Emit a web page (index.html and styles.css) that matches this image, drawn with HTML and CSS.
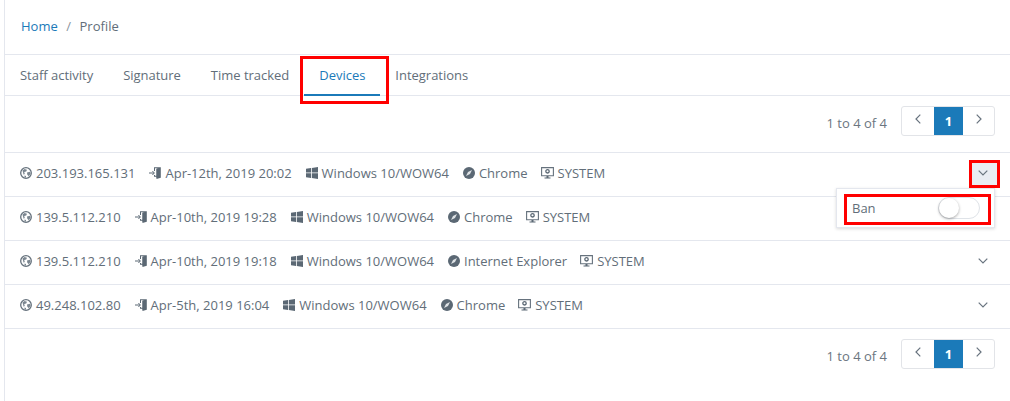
FILE: index.html
```html
<!DOCTYPE html>
<html lang="en">
<head>
<meta charset="utf-8">
<title>Devices</title>
<link rel="stylesheet" href="styles.css">
</head>
<body>
<svg width="0" height="0" class="defs">
  <symbol id="i-globe" viewBox="0 0 12 12"><circle cx="6" cy="6" r="5.300" fill="none" stroke="#66727d" stroke-width="1.300"/><path d="M2.500 3.500l2-1.500 2.500 .8-.8 1.700-2 .4 .6 2-1.200 .8zM7 5.500l3-.8 .6 2-1.800 2.600-1.500-1.500zM4.500 8.500l1.500 .5 0 1.800-1.500-.5z" fill="#7b8690"/></symbol>
  <symbol id="i-login" viewBox="0 0 12 12"><path d="M5 .3h6.800v10.500L7.500 12V9.800H5V8h1V8.800h1.500V1.800L10 1.300H6V4H5z" fill="#5b6874"/><path d="M7.500 1.800 11 1v9.200l-3.500 1z" fill="#5b6874"/><path d="M0 6h5M3.400 4l2 2-2 2" fill="none" stroke="#5b6874" stroke-width="1"/></symbol>
  <symbol id="i-win" viewBox="0 0 12 12"><path d="M0 1.700 5 1v4.500H0zM5.800.9 12 0v5.500H5.800zM0 6.300h5v4.700l-5-.7zM5.800 6.300H12V12l-6.200-.9z" fill="#5b6874"/></symbol>
  <symbol id="i-compass" viewBox="0 0 12 12"><circle cx="6" cy="6" r="6" fill="#5b6874"/><path d="M9 3 7 7 3 9 5 5z" fill="#dfe3e6"/></symbol>
  <symbol id="i-monitor" viewBox="0 0 13 12"><path d="M.6.600h11.800v8.200H.6z" fill="none" stroke="#66727d" stroke-width="1.100"/><circle cx="6.500" cy="4.300" r="1.700" fill="none" stroke="#5b6874" stroke-width="1.300"/><path d="M5.500 9h2v1.500h2v1h-6v-1h2z" fill="#5b6874"/></symbol>
  <symbol id="i-chev" viewBox="0 0 10 6"><path d="M.7.700 5 5 9.300.700" fill="none" stroke="#69747f" stroke-width="1.200"/></symbol>
</svg>
<main class="page">
  <nav class="crumbs"><a class="crumb-link">Home</a><span class="crumb-sep">/</span><span>Profile</span></nav>
  <div class="tabs">
    <span class="tab">Staff activity</span>
    <span class="tab">Signature</span>
    <span class="tab">Time tracked</span>
    <span class="tab tab-active">Devices</span>
    <span class="tab">Integrations</span>
  </div>
  <div class="pager-row">
    <span class="count">1 to 4 of 4</span>
    <div class="pager">
      <span class="pg pg-first"><svg class="pg-chev pg-prev"><use href="#i-chev"/></svg></span>
      <span class="pg pg-on">1</span>
      <span class="pg pg-last"><svg class="pg-chev pg-next"><use href="#i-chev"/></svg></span>
    </div>
  </div>
  <div class="list">
    <div class="row">
      <span class="item"><svg class="ic"><use href="#i-globe"/></svg>203.193.165.131</span>
      <span class="item"><svg class="ic"><use href="#i-login"/></svg>Apr-12th, 2019 20:02</span>
      <span class="item"><svg class="ic"><use href="#i-win"/></svg>Windows 10/WOW64</span>
      <span class="item"><svg class="ic"><use href="#i-compass"/></svg>Chrome</span>
      <span class="item item-m"><svg class="ic ic-m"><use href="#i-monitor"/></svg>SYSTEM</span>
      <span class="toggle toggle-open"><svg class="chev"><use href="#i-chev"/></svg></span>
      <div class="menu">
        <span>Ban</span>
        <span class="switch"><span class="knob"></span></span>
      </div>
    </div>
    <div class="row">
      <span class="item"><svg class="ic"><use href="#i-globe"/></svg>139.5.112.210</span>
      <span class="item"><svg class="ic"><use href="#i-login"/></svg>Apr-10th, 2019 19:28</span>
      <span class="item"><svg class="ic"><use href="#i-win"/></svg>Windows 10/WOW64</span>
      <span class="item"><svg class="ic"><use href="#i-compass"/></svg>Chrome</span>
      <span class="item item-m"><svg class="ic ic-m"><use href="#i-monitor"/></svg>SYSTEM</span>
      <span class="toggle"><svg class="chev"><use href="#i-chev"/></svg></span>
    </div>
    <div class="row">
      <span class="item"><svg class="ic"><use href="#i-globe"/></svg>139.5.112.210</span>
      <span class="item"><svg class="ic"><use href="#i-login"/></svg>Apr-10th, 2019 19:18</span>
      <span class="item"><svg class="ic"><use href="#i-win"/></svg>Windows 10/WOW64</span>
      <span class="item"><svg class="ic"><use href="#i-compass"/></svg>Internet Explorer</span>
      <span class="item item-m"><svg class="ic ic-m"><use href="#i-monitor"/></svg>SYSTEM</span>
      <span class="toggle"><svg class="chev"><use href="#i-chev"/></svg></span>
    </div>
    <div class="row">
      <span class="item"><svg class="ic"><use href="#i-globe"/></svg>49.248.102.80</span>
      <span class="item"><svg class="ic"><use href="#i-login"/></svg>Apr-5th, 2019 16:04</span>
      <span class="item"><svg class="ic"><use href="#i-win"/></svg>Windows 10/WOW64</span>
      <span class="item"><svg class="ic"><use href="#i-compass"/></svg>Chrome</span>
      <span class="item item-m"><svg class="ic ic-m"><use href="#i-monitor"/></svg>SYSTEM</span>
      <span class="toggle"><svg class="chev"><use href="#i-chev"/></svg></span>
    </div>
  </div>
  <div class="pager-row pager-row-bottom">
    <span class="count">1 to 4 of 4</span>
    <div class="pager">
      <span class="pg pg-first"><svg class="pg-chev pg-prev"><use href="#i-chev"/></svg></span>
      <span class="pg pg-on">1</span>
      <span class="pg pg-last"><svg class="pg-chev pg-next"><use href="#i-chev"/></svg></span>
    </div>
  </div>
  <div class="mark mark-tab"></div>
  <div class="mark mark-toggle"></div>
  <div class="mark mark-ban"></div>
</main>
</body>
</html>
```
FILE: styles.css
```css
* { box-sizing: border-box; }
html, body { margin: 0; padding: 0; background: #fff; height: 401px; overflow: hidden; }
body { font-family: "Open Sans", sans-serif; font-size: 13px; color: #626e79; }
.defs { position: absolute; }
.page { position: relative; margin-left: 4px; height: 401px; border-left: 1px solid #e4e7ee; }
.crumbs { height: 55px; padding: 0 16px 2px; display: flex; align-items: center; gap: 8.5px; border-bottom: 1px solid #e4e7ee; }
.crumb-link { color: #1b7ab9; }
.crumb-sep { color: #8a949e; }
.tabs { height: 41px; display: flex; border-bottom: 1px solid #e4e7ee; letter-spacing: -0.02px; }
.tab { padding: 0 15px; line-height: 41px; height: 41px; }
.tab-active { color: #1b7ab9; border-bottom: 2px solid #1b7ab9; }
.pager-row { height: 56px; display: flex; justify-content: flex-end; align-items: flex-start; padding: 10px 15px 0 0; gap: 14px; }
.pager-row-bottom { height: 50px; }
.count { color: #6b7680; margin-top: 8px; }
.pager { display: flex; height: 30px; border: 1px solid #e2e4e8; border-radius: 3px; }
.pg { width: 29px; display: flex; align-items: center; justify-content: center; }
.pg-first { width: 32px; padding-bottom: 4px; }
.pg-last { width: 31px; padding-bottom: 4px; }
.pg-on { background: #1b7ab9; color: #fff; font-weight: 700; }
.pg-chev { width: 10px; height: 6px; }
.pg-prev { transform: rotate(90deg); }
.pg-next { transform: rotate(-90deg); }
.list { border-top: 1px solid #e4e7ee; border-bottom: 1px solid #e4e7ee; }
.row { position: relative; height: 44px; display: flex; align-items: center; padding: 0 0 3px 15px; gap: 14px; border-top: 1px solid #e4e7ee; }
.row:first-child { border-top: 0; height: 43px; }
.item { display: flex; align-items: center; gap: 4px; white-space: nowrap; }
.item-m { margin-left: -1px; }
.ic { width: 12px; height: 12px; }
.ic-m { width: 13px; }
.toggle { position: absolute; right: 13px; top: 7px; width: 28px; height: 26px; display: flex; align-items: center; justify-content: center; }
.toggle-open { background: #e9ecf3; }
.chev { width: 10px; height: 6px; }
.menu { position: absolute; z-index: 2; top: 35px; right: 15px; width: 159px; height: 40px; padding: 0 14px 0 15px; display: flex; align-items: center; justify-content: space-between; background: #fff; border: 1px solid #e4e7ee; box-shadow: 0 1px 3px rgba(0,0,0,.15); }
.switch { width: 42px; height: 22px; border: 1px solid #dfe3e8; border-radius: 11px; position: relative; display: block; }
.knob { position: absolute; left: 0; top: 0; width: 20px; height: 20px; border-radius: 50%; background: #fff; box-shadow: 0 1px 3px rgba(0,0,0,.35); }
.mark { position: absolute; z-index: 3; border: 3px solid #f00; }
.mark-tab { left: 295px; top: 56px; width: 89px; height: 48px; }
.mark-toggle { left: 964px; top: 160px; width: 31px; height: 28px; }
.mark-ban { left: 839px; top: 194px; width: 147px; height: 31px; }
```
